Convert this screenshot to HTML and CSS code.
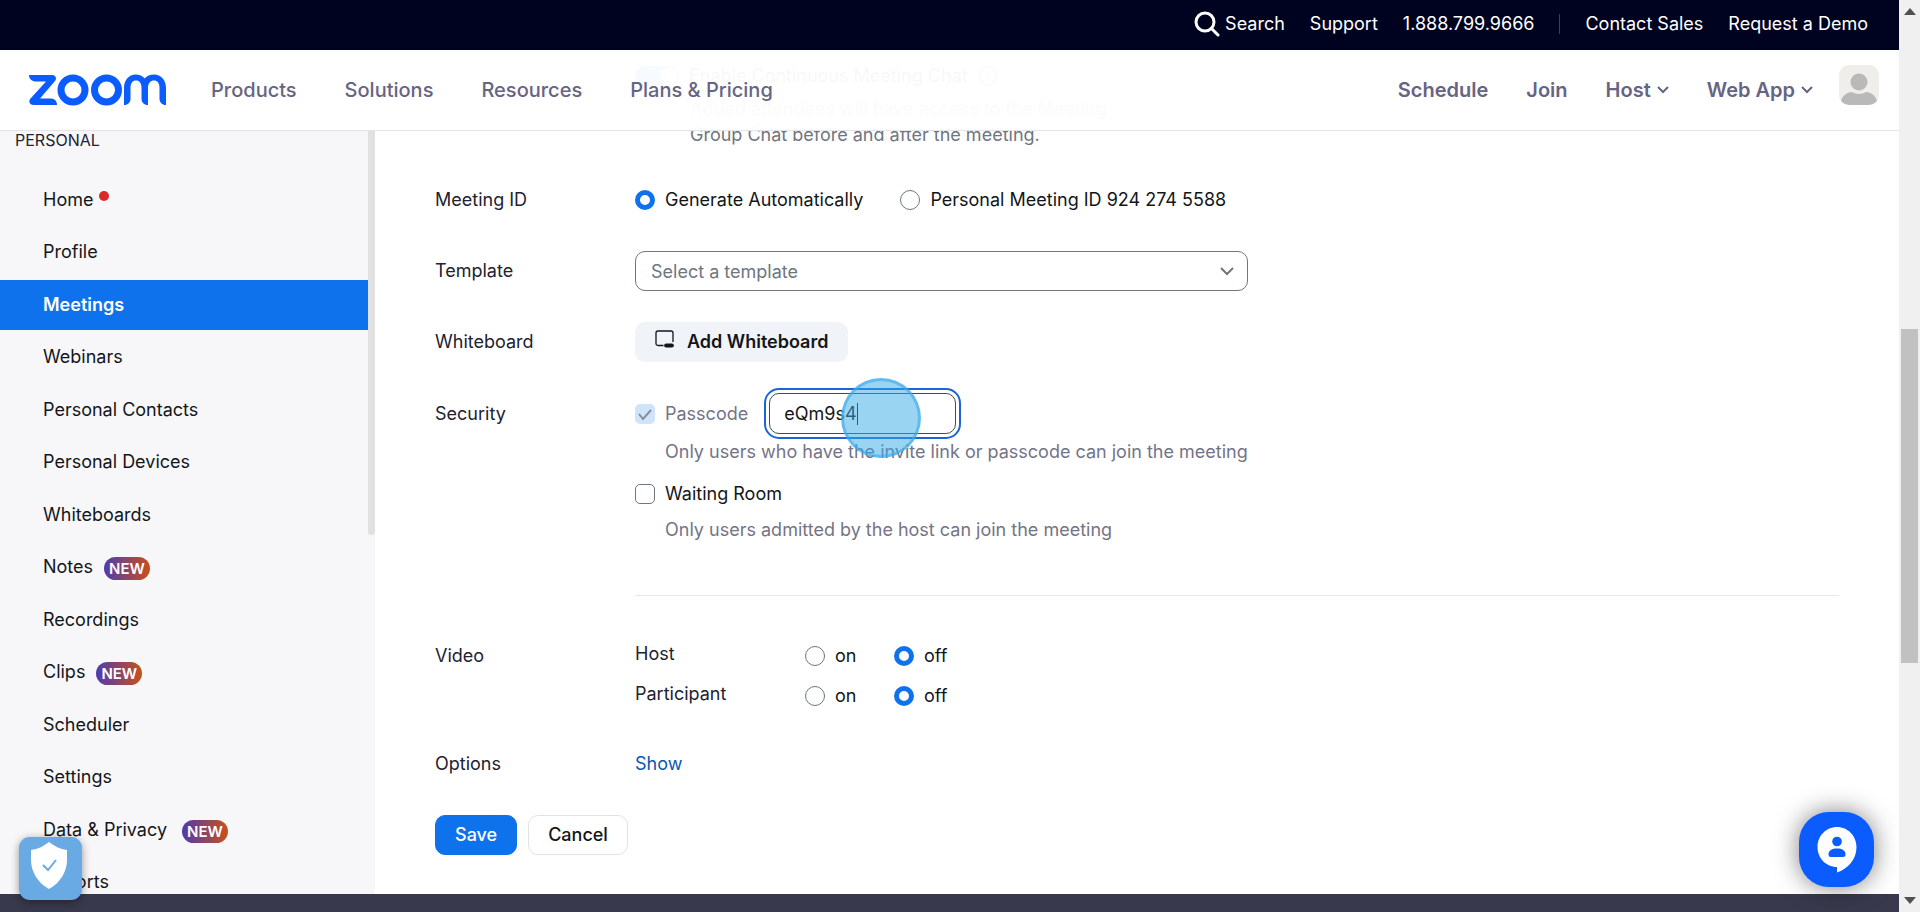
FILE: index.html
```html
<!DOCTYPE html>
<html lang="en">
<head>
    <meta charset="UTF-8">
    <meta name="viewport" content="width=device-width, initial-scale=1.0">
    <title>Schedule Meeting - Zoom</title>
    <link rel="stylesheet" href="styles.css">
</head>
<body>
    <div class="page">
        <div class="topbar">
            <a href="#" class="search">
                <svg width="26" height="26" viewBox="0 0 26 26" fill="none" stroke="#fff" stroke-width="3" stroke-linecap="round"><circle cx="11" cy="11" r="9"/><path d="M17.5 17.5l6.5 6.5"/></svg>
                Search
            </a>
            <a href="#">Support</a>
            <a href="#">1.888.799.9666</a>
            <span class="separator"></span>
            <a href="#">Contact Sales</a>
            <a href="#">Request a Demo</a>
        </div>

        <header class="header">
            <a href="#" class="logo" aria-label="Zoom">
                <svg width="137" height="32" viewBox="0 0 137 32" fill="none" stroke="#0b5cff" stroke-width="7">
                    <path d="M0 1h23c4 0 5 4 3 6L11 24.500h11c4 0 6 3 6 6.500H5c-5 0-6-4-3-7L17 7.500H7C3 7.500 0 5 0 1z" fill="#0b5cff" stroke="none"/>
                    <circle cx="44" cy="16" r="12"/>
                    <circle cx="77.500" cy="16" r="12"/>
                    <path d="M95 31V14c0-8 5-13.500 11.500-13.500 4 0 7 1.500 9.200 4 2.200-2.500 5.300-4 9.300-4 7 0 12 5.500 12 13.500v17c-4 0-6.500-2.500-6.500-6.500V14c0-5-2-7.500-5.500-7.500s-6 2.500-6 7.500v17c-4 0-6.500-2.500-6.500-6.500V14c0-5-2-7.500-5.500-7.500s-5.500 2.500-5.500 7.500v10.500c0 4-2.500 6.500-6.500 6.500z" fill="#0b5cff" stroke="none"/>
                </svg>
            </a>
            <nav class="nav">
                <a href="#">Products</a>
                <a href="#">Solutions</a>
                <a href="#">Resources</a>
                <a href="#">Plans &amp; Pricing</a>
            </nav>
            <nav class="nav-actions">
                <a href="#">Schedule</a>
                <a href="#">Join</a>
                <a href="#">Host <svg width="12" height="8" viewBox="0 0 12 8" fill="none" stroke="currentColor" stroke-width="2"><path d="M1 1l5 5 5-5"/></svg></a>
                <a href="#">Web App <svg width="12" height="8" viewBox="0 0 12 8" fill="none" stroke="currentColor" stroke-width="2"><path d="M1 1l5 5 5-5"/></svg></a>
            </nav>
            <a href="#" class="avatar" aria-label="Account">
                <svg width="40" height="40" viewBox="0 0 40 40" fill="#b9b9b9"><circle cx="20" cy="17" r="8.500"/><path d="M2 36c1-5 6-9 11-9 4 2.500 10 2.500 14 0 5 0 10 4 11 9l-3 4H5z"/></svg>
            </a>
        </header>

        <div class="columns">
            <aside class="sidebar">
                <div class="sidebar-content">
                    <h2>PERSONAL</h2>
                    <ul class="menu">
                        <li><a href="#">Home <span class="dot"></span></a></li>
                        <li><a href="#">Profile</a></li>
                        <li><a href="#" class="active">Meetings</a></li>
                        <li><a href="#">Webinars</a></li>
                        <li><a href="#">Personal Contacts</a></li>
                        <li><a href="#">Personal Devices</a></li>
                        <li><a href="#">Whiteboards</a></li>
                        <li><a href="#">Notes <span class="new">NEW</span></a></li>
                        <li><a href="#">Recordings</a></li>
                        <li><a href="#">Clips <span class="new">NEW</span></a></li>
                        <li><a href="#">Scheduler</a></li>
                        <li><a href="#">Settings</a></li>
                        <li><a href="#" class="wide">Data &amp; Privacy <span class="new">NEW</span></a></li>
                        <li><a href="#">Reports</a></li>
                    </ul>
                </div>
                <div class="sidebar-scroll"></div>
            </aside>

            <main>
                <form class="form">
                    <div class="row chat-row">
                        <div class="field">
                            <label class="choice chat">
                                <input type="checkbox" class="switch" checked>
                                Enable Continuous Meeting Chat
                                <svg width="20" height="20" viewBox="0 0 20 20" fill="none" stroke="#6e7680" stroke-width="2"><circle cx="10" cy="10" r="9"/><path d="M10 9v6M10 5v2"/></svg>
                            </label>
                            <p class="chat-hint">Added attendees will have access to the Meeting<br>Group Chat before and after the meeting.</p>
                        </div>
                    </div>

                    <div class="row">
                        <span class="label">Meeting ID</span>
                        <div class="field choices meeting-id">
                            <label class="choice"><input type="radio" name="meetingId" checked> Generate Automatically</label>
                            <label class="choice"><input type="radio" name="meetingId"> Personal Meeting ID 924 274 5588</label>
                        </div>
                    </div>

                    <div class="row">
                        <label class="label" for="template">Template</label>
                        <div class="field select">
                            <select id="template">
                                <option>Select a template</option>
                            </select>
                            <svg width="14" height="9" viewBox="0 0 14 9" fill="none" stroke="#6e7680" stroke-width="2"><path d="M1 1l6 6 6-6"/></svg>
                        </div>
                    </div>

                    <div class="row">
                        <span class="label">Whiteboard</span>
                        <div class="field">
                            <button type="button" class="whiteboard">
                                <svg width="20" height="18" viewBox="0 0 20 18" fill="none" stroke="#131619" stroke-width="1.300"><path d="M8.500 15.500H3a2 2 0 0 1-2-2V3a2 2 0 0 1 2-2h13a2 2 0 0 1 2 2v9"/><rect x="9.500" y="14" width="9" height="3" rx="1.500" fill="#131619" stroke-width="1"/></svg>
                                Add Whiteboard
                            </button>
                        </div>
                    </div>

                    <div class="row security">
                        <span class="label">Security</span>
                        <div class="field">
                            <div class="passcode">
                                <label class="choice"><input type="checkbox" checked disabled> Passcode</label>
                                <div class="passcode-input">
                                    <input type="text" value="eQm9s4" aria-label="Passcode">
                                    <span class="caret"></span>
                                    <span class="click-ring"></span>
                                </div>
                            </div>
                            <p class="hint">Only users who have the invite link or passcode can join the meeting</p>
                            <label class="choice waiting"><input type="checkbox"> Waiting Room</label>
                            <p class="hint">Only users admitted by the host can join the meeting</p>
                        </div>
                    </div>

                    <div class="row video">
                        <span class="label">Video</span>
                        <div class="field">
                            <div class="video-line">
                                <span>Host</span>
                                <label class="choice"><input type="radio" name="host"> on</label>
                                <label class="choice"><input type="radio" name="host" checked> off</label>
                            </div>
                            <div class="video-line">
                                <span>Participant</span>
                                <label class="choice"><input type="radio" name="participant"> on</label>
                                <label class="choice"><input type="radio" name="participant" checked> off</label>
                            </div>
                        </div>
                    </div>

                    <div class="row options">
                        <span class="label">Options</span>
                        <div class="field"><a href="#" class="show">Show</a></div>
                    </div>

                    <div class="buttons">
                        <button type="submit" class="save">Save</button>
                        <button type="button" class="cancel">Cancel</button>
                    </div>
                </form>
            </main>
        </div>

        <footer class="footer"></footer>

        <button class="privacy" aria-label="Cookie preferences">
            <svg width="38" height="48" viewBox="0 0 38 48"><path d="M19 0c5 4 11 7 18 8v10c0 12-7 23-18 29C8 41 1 30 1 18V8c7-1 13-4 18-8z" fill="#fff"/><path d="M13 23l5 5 8-10" fill="none" stroke="#69a9e4" stroke-width="2"/></svg>
        </button>
        <button class="support" aria-label="Chat">
            <svg width="40" height="46" viewBox="0 0 40 46"><path d="M20 0c11 0 19.500 9 19.500 20 0 13-9 22-19.500 25.500V40C9 40 .5 31 .5 20S9 0 20 0z" fill="#fff"/><circle cx="20" cy="14.500" r="4.800" fill="#0b5cff"/><path d="M14 30c-2 0-2.500-1-2.500-3 0-3.500 3.500-5.500 8.500-5.500s8.500 2 8.500 5.500c0 2-.5 3-2.500 3z" fill="#0b5cff"/></svg>
        </button>
    </div>

    <div class="scrollbar">
        <svg width="12" height="7" viewBox="0 0 12 7" fill="#505050"><path d="M6 0l6 7H0z"/></svg>
        <div class="track"><div class="thumb"></div></div>
        <svg width="12" height="7" viewBox="0 0 12 7" fill="#505050"><path d="M6 7L0 0h12z"/></svg>
    </div>
</body>
</html>
```
FILE: styles.css
```css
* {
    box-sizing: border-box;
}
body {
    margin: 0;
    display: flex;
    height: 100vh;
    overflow: hidden;
    font-family: Inter, "Liberation Sans", sans-serif;
    font-size: 18px;
    line-height: 26px;
    color: #222230;
    background-color: #ffffff;
}
a {
    color: inherit;
    text-decoration: none;
}
button, input, select {
    font: inherit;
    margin: 0;
}
button {
    cursor: pointer;
}
svg {
    display: block;
    flex: none;
}
p, h2, ul {
    margin: 0;
    padding: 0;
}
.page {
    position: relative;
    flex: 1;
    display: flex;
    flex-direction: column;
    min-width: 0;
}

/* top bar and header */
.topbar {
    display: flex;
    justify-content: flex-end;
    align-items: center;
    gap: 25px;
    height: 50px;
    padding: 0 31px 2px 0;
    background-color: #00031f;
    color: #ffffff;
}
.search {
    display: flex;
    align-items: center;
    gap: 5px;
}
.separator {
    width: 1px;
    height: 20px;
    background-color: #3d3f55;
}
.header {
    display: flex;
    align-items: center;
    height: 81px;
    margin-bottom: -81px;
    padding: 0 20px 0 29px;
    background-color: rgba(255, 255, 255, 0.97);
    border-bottom: 1px solid #e4e4e8;
    color: #666484;
    font-size: 20px;
    font-weight: 500;
    z-index: 2;
}
.nav {
    display: flex;
    gap: 48px;
    margin-left: 45px;
}
.nav-actions {
    display: flex;
    gap: 38px;
    margin-left: auto;
    font-weight: 600;
}
.nav-actions a {
    display: flex;
    align-items: center;
    gap: 6px;
}
.avatar {
    margin: 0 0 10px 26px;
    border-radius: 10px;
    background-color: #efeeea;
    overflow: hidden;
}

/* sidebar */
.columns {
    flex: 1;
    display: flex;
    min-height: 0;
}
.sidebar {
    display: flex;
    width: 375px;
    padding-top: 77px;
    background-color: #f7f7fa;
    overflow: hidden;
}
.sidebar-content {
    flex: 1;
}
.sidebar h2 {
    padding-left: 15px;
    font-size: 16px;
    font-weight: 400;
}
.menu {
    list-style: none;
    margin-top: 22px;
}
.menu li {
    margin-bottom: 2px;
}
.menu li:nth-child(even) {
    margin-bottom: 3px;
}
.menu a {
    display: flex;
    align-items: center;
    gap: 11px;
    height: 50px;
    padding-left: 43px;
    color: #131619;
}
.menu a.wide {
    gap: 15px;
}
.menu a.active {
    background-color: #0e72ed;
    color: #ffffff;
    font-weight: 600;
}
.dot {
    width: 10px;
    height: 10px;
    margin: 0 0 8px -5px;
    border-radius: 50%;
    background-color: #de2828;
}
.new {
    margin-top: 2px;
    padding: 0 5px;
    border-radius: 12px;
    background: linear-gradient(90deg, #4f3bb0, #c8501a);
    color: #ffffff;
    font-size: 15px;
    font-weight: 600;
    line-height: 23px;
}
.sidebar-scroll {
    width: 7px;
    height: 408px;
    border-radius: 4px;
    background-color: #e1e1e1;
}

/* meeting form */
main {
    flex: 1;
    padding: 13px 60px 0;
    min-width: 0;
}
.form {
    display: flex;
    flex-direction: column;
}
.row {
    display: grid;
    grid-template-columns: 200px 1fr;
    margin-bottom: 31px;
    line-height: 40px;
}
.label {
    grid-column: 1;
}
.field {
    grid-column: 2;
}
.chat-row {
    line-height: 26px;
    margin-bottom: 32px;
}
.choice {
    display: flex;
    align-items: center;
    gap: 10px;
    color: #131619;
}
.chat-hint {
    padding: 7px 0 0 55px;
    color: #6e7680;
}
.choices {
    display: flex;
    gap: 37px;
}
input[type="radio"], input[type="checkbox"] {
    appearance: none;
    flex: none;
    width: 20px;
    height: 20px;
    border: 1px solid #6e7680;
    border-radius: 50%;
    background-color: #ffffff;
}
input[type="radio"]:checked {
    border: 5px solid #0e72ed;
}
input[type="checkbox"] {
    border-radius: 5px;
}
input[type="checkbox"]:disabled {
    border: none;
    background: #cfe3fb url("data:image/svg+xml,%3Csvg xmlns='http://www.w3.org/2000/svg' width='20' height='20' fill='none' stroke='%23878f99' stroke-width='2'%3E%3Cpath d='M4 10l4 5 8-9'/%3E%3C/svg%3E");
}
input.switch {
    width: 44px;
    border: none;
    border-radius: 10px;
    background: radial-gradient(circle at 34px 10px, #ffffff 8px, #0e72ed 9px);
}
.select {
    display: grid;
    align-items: center;
    max-width: 613px;
}
.select select {
    grid-area: 1 / 1;
    appearance: none;
    height: 40px;
    padding: 0 15px;
    border: 1px solid #6e7680;
    border-radius: 10px;
    background-color: #ffffff;
    color: #6e7680;
}
.select svg {
    grid-area: 1 / 1;
    justify-self: end;
    margin-right: 14px;
    pointer-events: none;
}
.whiteboard {
    display: flex;
    align-items: center;
    gap: 12px;
    height: 40px;
    padding: 0 20px;
    border: none;
    border-radius: 10px;
    background-color: #f0f3f7;
    color: #131619;
    font-weight: 600;
}
.whiteboard svg {
    margin-bottom: 6px;
}
.security .field {
    padding-bottom: 52px;
    border-bottom: 1px solid #e8e8ec;
}
.security {
    line-height: 26px;
    margin-bottom: 40px;
}
.security .label {
    line-height: 42px;
}
.passcode {
    display: flex;
    gap: 21px;
    height: 41px;
}
.passcode .choice, .hint {
    color: #747487;
}
.passcode-input {
    position: relative;
}
.passcode-input input {
    display: block;
    width: 187px;
    height: 41px;
    padding: 0 14px;
    border: 1px solid #444b53;
    border-radius: 10px;
    color: #131619;
    outline: 2px solid #1a66d6;
    outline-offset: 3px;
}
.caret {
    position: absolute;
    top: 10px;
    left: 88px;
    width: 1px;
    height: 22px;
    background-color: #131619;
}
.click-ring {
    position: absolute;
    top: -15px;
    left: 72px;
    width: 80px;
    height: 80px;
    border: 3px solid rgba(60, 170, 235, 0.6);
    border-radius: 50%;
    background-color: rgba(52, 170, 232, 0.5);
    pointer-events: none;
}
.hint {
    padding: 5px 0 0 30px;
}
.waiting {
    padding-top: 16px;
}
.waiting + .hint {
    padding-top: 10px;
}
.video {
    margin-bottom: 28px;
}
.video-line {
    display: grid;
    grid-template-columns: 170px 89px 1fr;
}
.video-line > span {
    line-height: 36px;
}
.options {
    margin-bottom: 31px;
}
.show {
    color: #0956b5;
}
.buttons {
    display: flex;
    gap: 11px;
}
.save, .cancel {
    height: 40px;
    padding: 0 19px;
    border: 1px solid #dfe3e8;
    border-radius: 10px;
    background-color: #ffffff;
    color: #131619;
    font-weight: 500;
}
.save {
    border-color: #0e72ed;
    background-color: #0e72ed;
    color: #ffffff;
}
.footer {
    height: 18px;
    background-color: #39394d;
}

/* floating buttons */
.privacy, .support {
    position: absolute;
    display: flex;
    align-items: center;
    justify-content: center;
    border: none;
    padding: 0;
}
.privacy {
    left: 19px;
    bottom: 12px;
    width: 63px;
    height: 63px;
    padding: 0 3px 6px 0;
    border-radius: 11px;
    background-color: #69a9e4;
    box-shadow: 0 2px 8px rgba(0, 0, 0, 0.4);
}
.support {
    right: 25px;
    bottom: 25px;
    width: 75px;
    height: 75px;
    border-radius: 30px;
    background-color: #0b5cff;
    box-shadow: 0 0 24px rgba(0, 0, 0, 0.5);
}

/* page scrollbar */
.scrollbar {
    display: flex;
    flex-direction: column;
    align-items: center;
    gap: 8px;
    width: 21px;
    padding: 8px 0;
    background-color: #f0f0f0;
}
.track {
    flex: 1;
    padding-top: 306px;
}
.thumb {
    width: 17px;
    height: 334px;
    background-color: #c1c1c1;
}
```
